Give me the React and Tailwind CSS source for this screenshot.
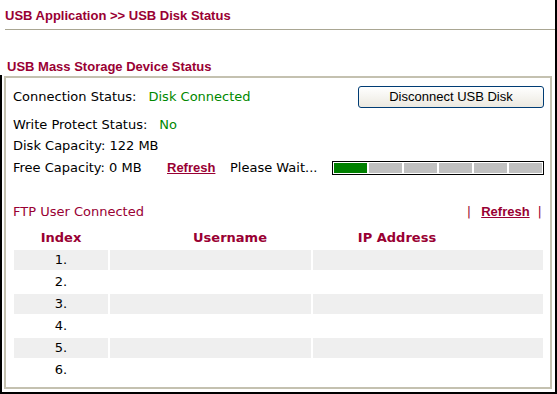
export default function App() {
  const rows = [1, 2, 3, 4, 5, 6];
  return (
    <div className="w-[557px] h-[394px] bg-white box-border border-r-2 border-b-2 border-black flex flex-col font-['DejaVu_Sans',sans-serif] text-[13px] text-black">
      <div className="pl-[5px] pt-[8px] h-[29px] leading-[16px] text-[13px] font-bold text-[#990033] font-['Liberation_Sans',Arial,sans-serif]">
        USB Application &gt;&gt; USB Disk Status
      </div>
      <div className="ml-[5px] h-px bg-[#a9a692]" />
      <div className="mt-[29px] pl-[7px] h-[16px] leading-[16px] text-[13px] font-bold text-[#990033] font-['Liberation_Sans',Arial,sans-serif]">
        USB Mass Storage Device Status
      </div>
      <div className="flex-1 border-l-2 border-black pt-[1px] pb-[3px] pl-[2px] pr-[3px] flex">
        <div className="flex-1 border-2 border-[#c4c1b0] flex flex-col">
          <div className="pl-[7px] pr-[6px] pt-[8px]">
            <div className="h-[22px] flex items-center">
              <span>Connection Status:</span>
              <span className="ml-[12px] text-[#008800]">Disk Connected</span>
              <button className="ml-auto w-[186px] h-[22px] rounded-[3px] border border-[#003c74] bg-gradient-to-b from-white to-[#ece9e0] text-[13px] font-['Liberation_Sans',Arial,sans-serif] text-black flex items-center justify-center">
                Disconnect USB Disk
              </button>
            </div>
            <div className="mt-[6px] h-[21px] flex items-center">
              <span>Write Protect Status:</span>
              <span className="ml-[12px] text-[#008800]">No</span>
            </div>
            <div className="h-[22px] flex items-center">
              <span>Disk Capacity: 122 MB</span>
            </div>
            <div className="h-[22px] flex items-center">
              <span className="w-[154px]">Free Capacity: 0 MB</span>
              <span className="w-[63px] font-bold underline text-[#990033] font-['Liberation_Sans',Arial,sans-serif]">Refresh</span>
              <span className="w-[102px]">Please Wait...</span>
              <div className="w-[212px] h-[14px] border border-black p-px flex gap-[2px] bg-white">
                <div className="flex-1 bg-[#008000]" />
                <div className="flex-1 bg-[#c0c0c0]" />
                <div className="flex-1 bg-[#c0c0c0]" />
                <div className="flex-1 bg-[#c0c0c0]" />
                <div className="flex-1 bg-[#c0c0c0]" />
                <div className="flex-1 bg-[#c0c0c0]" />
              </div>
            </div>
            <div className="mt-[23px] h-[20px] flex items-center pr-[2px] text-[#990033]">
              <span>FTP User Connected</span>
              <span className="ml-auto">|</span>
              <span className="ml-[10px] mr-[8px] font-bold underline font-['Liberation_Sans',Arial,sans-serif]">Refresh</span>
              <span>|</span>
            </div>
          </div>
          <div className="mt-[6px] ml-[8px] mr-[7px] flex flex-col gap-y-[2px]">
            <div className="grid grid-cols-[94px_240px_90px_1fr] gap-x-[2px] h-[20px] items-center font-bold text-[#990033]">
              <div className="text-center">Index</div>
              <div className="text-center">Username</div>
              <div className="text-center whitespace-nowrap">IP Address</div>
              <div />
            </div>
            {rows.map((r) => (
              <div key={r} className="grid grid-cols-[94px_201px_1fr] gap-x-[2px] h-[20px]">
                <div className={`flex items-center justify-center ${r % 2 ? "bg-[#efefef]" : ""}`}>{r}.</div>
                <div className={r % 2 ? "bg-[#efefef]" : ""} />
                <div className={r % 2 ? "bg-[#efefef]" : ""} />
              </div>
            ))}
          </div>
        </div>
      </div>
    </div>
  );
}
